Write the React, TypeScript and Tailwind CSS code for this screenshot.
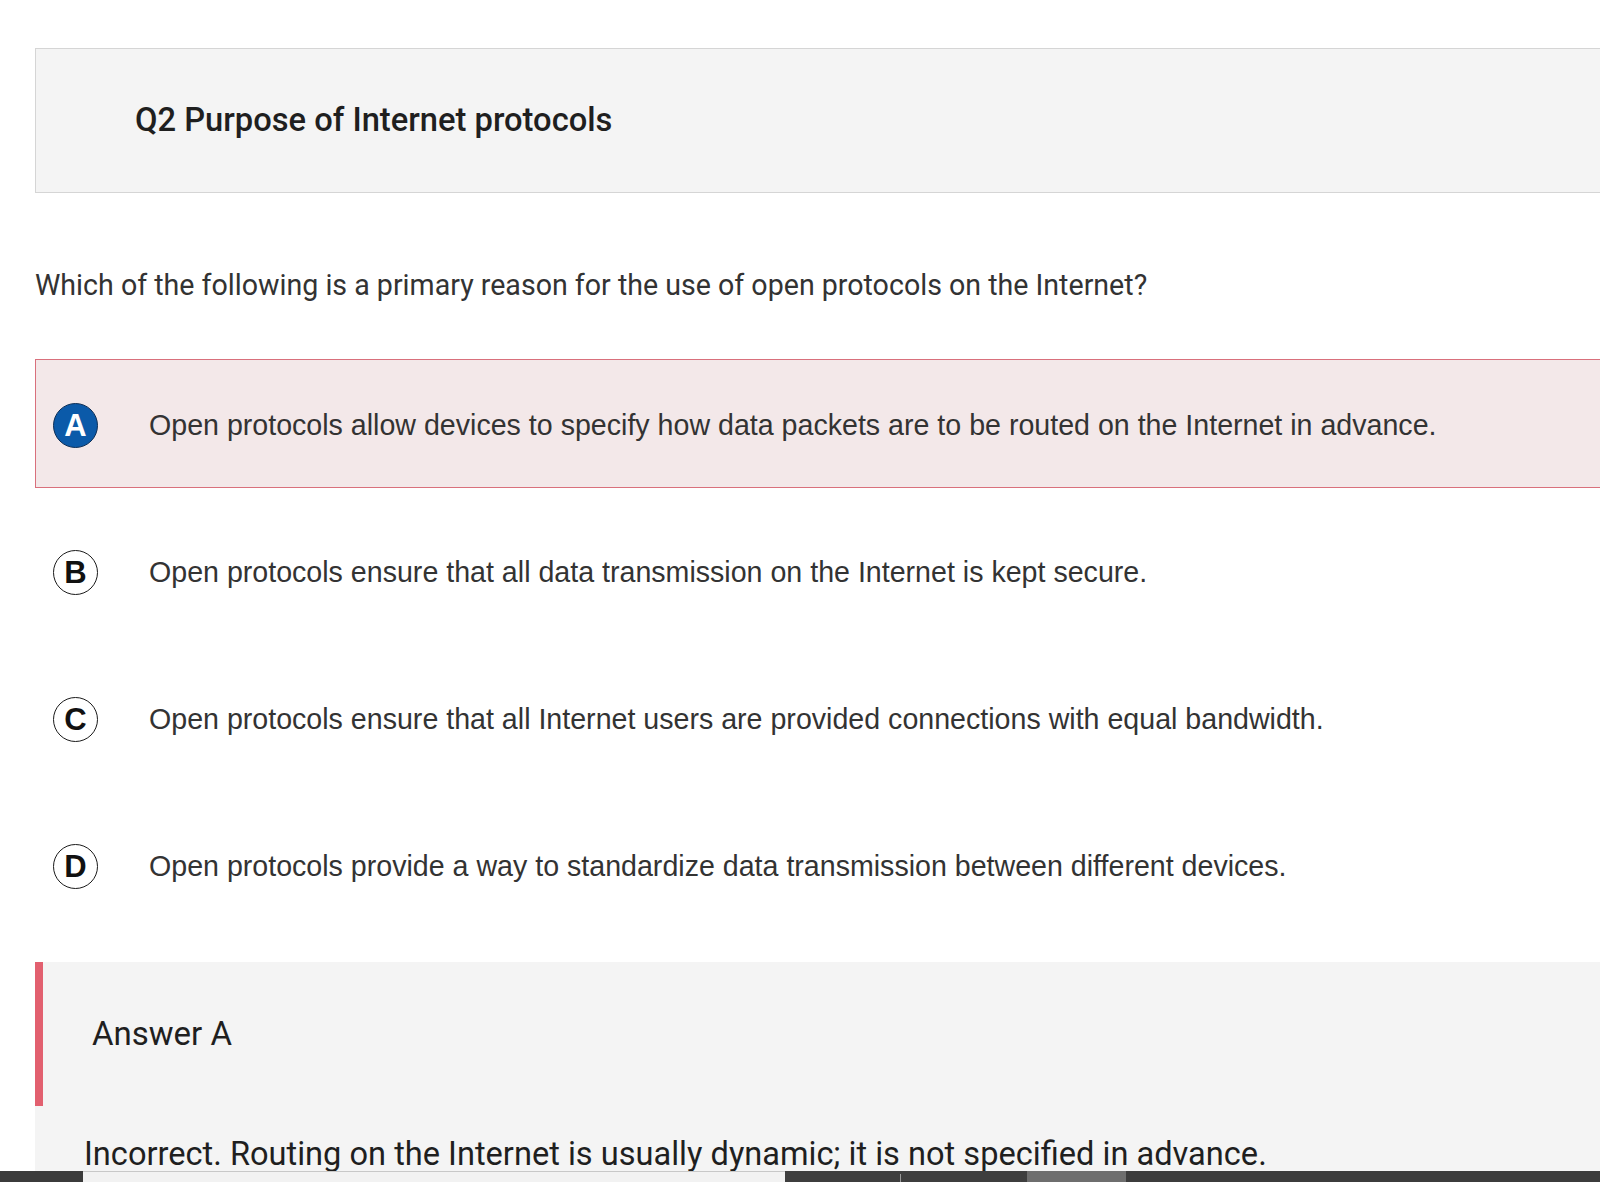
import React from "react";

const options = [
  { letter: "A", text: "Open protocols allow devices to specify how data packets are to be routed on the Internet in advance.", selected: true },
  { letter: "B", text: "Open protocols ensure that all data transmission on the Internet is kept secure.", selected: false },
  { letter: "C", text: "Open protocols ensure that all Internet users are provided connections with equal bandwidth.", selected: false },
  { letter: "D", text: "Open protocols provide a way to standardize data transmission between different devices.", selected: false },
];

function Badge({ letter, selected }: { letter: string; selected: boolean }) {
  return selected ? (
    <div className="mt-[3px] flex h-[45px] w-[45px] shrink-0 items-center justify-center rounded-full border-[1.5px] border-[#0d2f57] bg-[#0b5aa9] text-[31px] font-bold leading-none text-white [font-family:'Liberation_Sans',Arial,sans-serif]">
      {letter}
    </div>
  ) : (
    <div className="mt-[3px] flex h-[45px] w-[45px] shrink-0 items-center justify-center rounded-full border-[1.5px] border-[#1a1a1a] bg-white text-[31px] font-bold leading-none text-[#111] [font-family:'Liberation_Sans',Arial,sans-serif]">
      {letter}
    </div>
  );
}

export default function App() {
  return (
    <div className="relative h-[1182px] w-full overflow-hidden bg-white [font-family:Roboto,'Noto_Sans',sans-serif]">
      <div className="flex flex-col pl-[35px]">
        <div className="mt-[48px] flex h-[145px] items-center border border-r-0 border-[#d5d5d5] bg-[#f4f4f4] pl-[99px]">
          <h2 className="text-[32.7px] font-medium text-[#1f1f1f]">Q2 Purpose of Internet protocols</h2>
        </div>

        <p className="mt-[74px] text-[28.6px] leading-[36px] text-[#333]">
          Which of the following is a primary reason for the use of open protocols on the Internet?
        </p>

        <div className="mt-[56px] flex flex-col gap-[18px]">
          {options.map((o) => (
            <div
              key={o.letter}
              className={
                o.selected
                  ? "flex h-[129px] items-center border border-r-0 border-[#d9707c] bg-[#f3e8e9] pl-[17px]"
                  : "flex h-[129px] items-center border border-r-0 border-transparent pl-[17px]"
              }
            >
              <Badge letter={o.letter} selected={o.selected} />
              <span className="ml-[51px] mt-[4px] whitespace-nowrap text-[28.6px] text-[#333] [font-family:'Liberation_Sans',Arial,sans-serif]">
                {o.text}
              </span>
            </div>
          ))}
        </div>

        <div className="mt-[33px] flex flex-col bg-[#f4f4f4]">
          <div className="flex h-[144px] items-center border-l-[8px] border-[#e2606f] pl-[49px]">
            <span className="text-[33px] text-[#1f1f1f]">Answer A</span>
          </div>
          <p className="mt-[28px] whitespace-nowrap pl-[49px] text-[32.6px] leading-[40px] text-[#1f1f1f]">
            Incorrect. Routing on the Internet is usually dynamic; it is not specified in advance.
          </p>
          <div className="h-[40px]" />
        </div>
      </div>

      <div className="absolute bottom-0 left-0 flex h-[11px] w-full">
        <div className="w-[83px] bg-[#3b3b3b]" />
        <div className="w-[702px] border-t border-[#c8c8c8] bg-[#f2f2f2]" />
        <div className="relative w-[242px] bg-[#3e3e3e]">
          <div className="absolute left-[115px] top-[3px] h-[8px] w-[1px] bg-[#9a9a9a]" />
        </div>
        <div className="w-[99px] bg-[#6e6e6e]" />
        <div className="flex-1 bg-[#3c3c3c]" />
      </div>
    </div>
  );
}
